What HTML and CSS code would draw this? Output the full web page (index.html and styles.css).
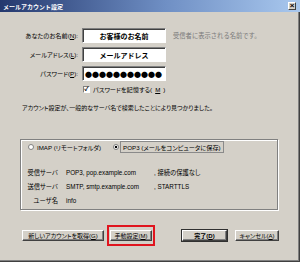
FILE: index.html
```html
<!DOCTYPE html>
<html lang="ja">
<head>
    <meta charset="UTF-8">
    <title>メールアカウント設定</title>
    <link rel="stylesheet" href="styles.css">
</head>
<body>

    <div class="window">
        <div class="titlebar">
            <span class="title">メールアカウント設定</span>
            <span class="close">×</span>
        </div>

        <div class="fields">
            <label class="label">あなたのお名前(<u>N</u>):</label>
            <div class="box text">お客様のお名前</div>
            <span class="hint">受信者に表示される名前です。</span>

            <label class="label">メールアドレス(<u>L</u>):</label>
            <div class="box text">メールアドレス</div>
            <span></span>

            <label class="label">パスワード(<u>P</u>):</label>
            <div class="box dots">●●●●●●●●●●●</div>
            <span></span>

            <span></span>
            <div class="check-row"><span class="checkbox">✓</span>パスワードを記憶する(<u>M</u>)</div>
        </div>

        <p class="found">アカウント設定が、一般的なサーバ名で検索したことにより見つかりました。</p>

        <div class="group">
            <div class="radio-row">
                <span class="radio"></span>
                <span class="radio-label">IMAP (リモートフォルダ)</span>
                <span class="radio checked"></span>
                <span class="radio-label focus">POP3 (メールをコンピュータに保存)</span>
            </div>
            <div class="servers">
                <span class="slabel">受信サーバ</span>
                <span>POP3, pop.example.com</span>
                <span>, 接続の保護なし</span>

                <span class="slabel">送信サーバ</span>
                <span>SMTP, smtp.example.com</span>
                <span>, STARTTLS</span>

                <span class="slabel">ユーザ名</span>
                <span>info</span>
                <span></span>
            </div>
        </div>

        <div class="buttons">
            <button class="btn wide">新しいアカウントを取得(<u>G</u>)</button>
            <span class="marked"><button class="btn manual">手動設定(<u>M</u>)</button></span>
            <button class="btn done">完了(<u>D</u>)</button>
            <button class="btn cancel">キャンセル(<u>A</u>)</button>
        </div>
    </div>

</body>
</html>
```

FILE: styles.css
```css
*
{
    padding: 0;
    margin: 0;
    box-sizing: border-box;
}

body
{
    width: 300px;
    height: 262px;
    overflow: hidden;
    font-family: "Liberation Sans", "Noto Sans CJK JP", sans-serif;
    font-size: 6.4px;
    color: #000;
}

.window
{
    width: 300px;
    height: 262px;
    background: #d4d0c8;
    box-shadow: inset -1px -1px #404040, inset -2px -2px #808080;
    display: flex;
    flex-direction: column;
}

.titlebar
{
    height: 12px;
    display: flex;
    align-items: center;
    justify-content: space-between;
    padding: 0 4px 0 3px;
    background: linear-gradient(90deg, #24386e 0%, #6f8fc4 55%, #a9c8ee 100%);
}

.title
{
    color: #fff;
    font-weight: bold;
    font-size: 6px;
}

.close
{
    width: 8px;
    height: 8px;
    display: flex;
    align-items: center;
    justify-content: center;
    background: #d4d0c8;
    border: 1px solid;
    border-color: #fff #404040 #404040 #fff;
    font-size: 8px;
    font-weight: bold;
    line-height: 1;
}

.fields
{
    display: grid;
    grid-template-columns: 78px 84px 1fr;
    grid-template-rows: 15px 15px 15px 8px;
    column-gap: 4px;
    row-gap: 4px;
    margin-top: 16px;
}

.label
{
    text-align: right;
    align-self: center;
    font-size: 6.2px;
    font-feature-settings: "palt";
}

.box
{
    background: #fff;
    border: 1px solid;
    border-color: #808080 #fff #fff #808080;
    box-shadow: inset 1px 1px #404040;
    display: flex;
    align-items: center;
}

.box.text
{
    justify-content: center;
    font-weight: bold;
    font-size: 7px;
}

.box.dots
{
    padding-left: 2px;
    font-family: "Noto Sans CJK JP", sans-serif;
    font-size: 7px;
    overflow: hidden;
    white-space: nowrap;
}

.hint
{
    align-self: center;
    padding-left: 3px;
    color: #7a7a7a;
    font-size: 6.3px;
}

.check-row
{
    grid-column: 2 / span 2;
    display: flex;
    align-items: center;
    gap: 3px;
    padding-left: 1px;
    font-size: 6.2px;
    font-feature-settings: "palt";
}

.checkbox
{
    width: 7px;
    height: 7px;
    background: #fff;
    border: 1px solid;
    border-color: #808080 #fff #fff #808080;
    font-size: 6px;
    line-height: 5px;
    text-align: center;
    font-weight: bold;
}

.found
{
    margin: 11px 0 0 22px;
    line-height: 9px;
    font-size: 6px;
    font-feature-settings: "palt";
}

.group
{
    margin: 26px 0 0 20px;
    width: 258px;
    height: 71px;
    border: 1px solid #808080;
    box-shadow: 1px 1px #fff, inset 1px 1px #fff;
    padding-top: 1px;
}

.radio-row
{
    height: 12px;
    display: flex;
    align-items: center;
    padding-left: 7px;
}

.radio
{
    width: 6px;
    height: 6px;
    border-radius: 50%;
    background: #fff;
    border: 1px solid #808080;
    margin-right: 3px;
}

.radio.checked
{
    margin-left: 12px;
    background: radial-gradient(circle, #000 0 1.2px, #fff 1.6px);
}

.radio-label
{
    font-size: 6.2px;
    font-feature-settings: "palt";
}

.radio-label.focus
{
    height: 12px;
    padding: 0 2px;
    display: flex;
    align-items: center;
    border: 1px solid #8a8a8a;
    margin-left: -2px;
}

.servers
{
    margin-top: 12px;
    display: grid;
    grid-template-columns: 37px 80px 1fr;
    grid-auto-rows: 14px;
    column-gap: 8px;
    align-items: center;
    font-size: 6.3px;
    font-feature-settings: "palt";
}

.slabel
{
    text-align: right;
}

.buttons
{
    margin-top: 15px;
    height: 21px;
    display: flex;
    align-items: center;
    padding-left: 22px;
}

.btn
{
    height: 11px;
    background: #d4d0c8;
    border: 1px solid;
    border-color: #fff #404040 #404040 #fff;
    box-shadow: inset -1px -1px #808080;
    font-family: "Liberation Sans", "Noto Sans CJK JP", sans-serif;
    font-size: 6px;
    font-feature-settings: "palt";
    color: #000;
    white-space: nowrap;
    line-height: 1;
}

.btn.wide
{
    width: 82px;
}

.marked
{
    margin-left: 3px;
    width: 48px;
    height: 21px;
    border: 2px solid #e0141e;
    padding: 3px 1px;
    display: flex;
}

.btn.manual
{
    width: 42px;
}

.btn.done
{
    width: 45px;
    margin-left: 27px;
    font-weight: bold;
    outline: 1px solid #303030;
}

.btn.cancel
{
    width: 44px;
    margin-left: 8px;
}
```
